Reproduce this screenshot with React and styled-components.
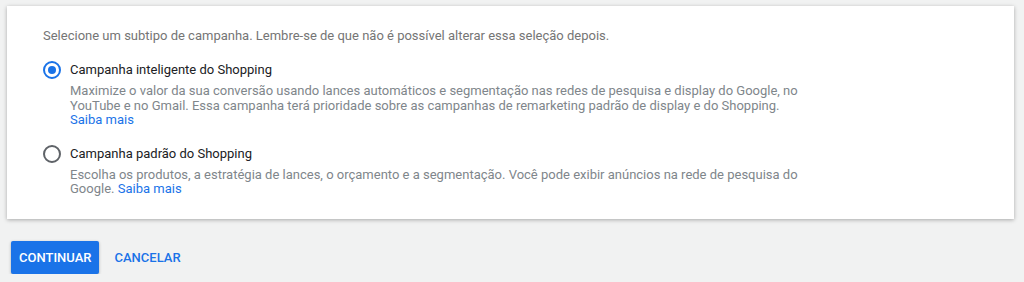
import styled, { createGlobalStyle } from 'styled-components';

const Global = createGlobalStyle`
    body {
        margin: 0;
        background: #f1f2f2;
        font-family: Roboto, "Liberation Sans", sans-serif;
    }
`

const options = [
    {
        title: 'Campanha inteligente do Shopping',
        text: 'Maximize o valor da sua conversão usando lances automáticos e segmentação nas redes de pesquisa e display do Google, no YouTube e no Gmail. Essa campanha terá prioridade sobre as campanhas de remarketing padrão de display e do Shopping.',
        breakLink: true,
        checked: true,
    },
    {
        title: 'Campanha padrão do Shopping',
        text: 'Escolha os produtos, a estratégia de lances, o orçamento e a segmentação. Você pode exibir anúncios na rede de pesquisa do Google.',
        breakLink: false,
        checked: false,
    },
]

export default function App(){
    return (
    <Page>
        <Global />
        <Card>
            <Intro>Selecione um subtipo de campanha. Lembre-se de que não é possível alterar essa seleção depois.</Intro>
            {options.map((o) => (
                <Option key={o.title}>
                    <Radio checked={o.checked} />
                    <div>
                        <OptionTitle>{o.title}</OptionTitle>
                        <Description>
                            {o.text}
                            {o.breakLink ? <br /> : ' '}
                            <a href="#">Saiba mais</a>
                        </Description>
                    </div>
                </Option>
            ))}
        </Card>
        <Actions>
            <Primary>Continuar</Primary>
            <Flat>Cancelar</Flat>
        </Actions>
    </Page>
    )
}

const Page = styled.div`
    padding: 6px 10px 0 7px;
`

const Card = styled.div`
    background: #ffffff;
    box-shadow: 0 1px 4px rgba(0, 0, 0, 0.3);
    padding: 22px 36px 20px 36px;
    height: 213px;
    box-sizing: border-box;
`

const Intro = styled.div`
    font-size: 13px;
    line-height: 16px;
    color: #757575;
    margin-bottom: 18px;
`

const Option = styled.div`
    display: flex;
    gap: 9px;
    margin-bottom: 18px;
`

const Radio = styled.span`
    width: 18px;
    height: 18px;
    flex: none;
    box-sizing: border-box;
    border-radius: 50%;
    border: 2px solid ${p => p.checked ? '#1a73e8' : '#5f6368'};
    margin-top: -1px;
    display: flex;
    align-items: center;
    justify-content: center;

    &::after {
        content: '';
        width: 8px;
        height: 8px;
        border-radius: 50%;
        background: ${p => p.checked ? '#1a73e8' : 'transparent'};
    }
`

const OptionTitle = styled.div`
    font-size: 13px;
    line-height: 16px;
    color: #202124;
    margin-bottom: 6px;
`

const Description = styled.div`
    font-size: 13px;
    line-height: 14.5px;
    color: #80868b;
    max-width: 735px;

    a {
        color: #1a73e8;
        text-decoration: none;
    }
`

const Actions = styled.div`
    display: flex;
    align-items: center;
    gap: 8px;
    padding: 22px 0 0 4px;
`

const Primary = styled.button`
    font-family: Roboto, "Liberation Sans", sans-serif;
    font-size: 13px;
    font-weight: 500;
    text-transform: uppercase;
    color: #ffffff;
    background: #1a73e8;
    border: 0;
    border-radius: 2px;
    height: 33px;
    padding: 0 8px;
    box-shadow: 0 1px 3px rgba(0, 0, 0, 0.3);
`

const Flat = styled.button`
    font-family: Roboto, "Liberation Sans", sans-serif;
    font-size: 13px;
    font-weight: 500;
    text-transform: uppercase;
    color: #1a73e8;
    background: transparent;
    border: 0;
    height: 33px;
    padding: 0 7px;
`
